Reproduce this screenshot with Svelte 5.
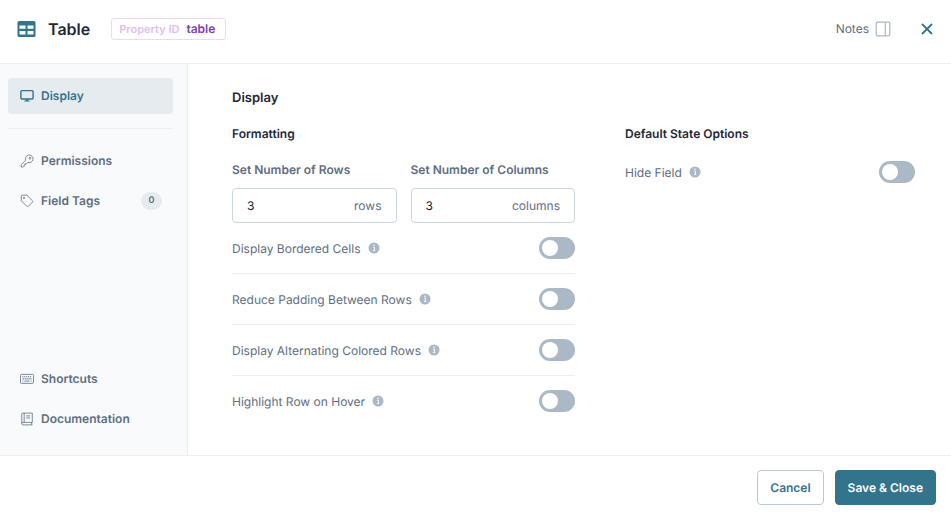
<script>
  let activeSection = 'display';
  let rows = '3';
  let columns = '3';
  let hideField = false;

  const navItems = [
    { id: 'permissions', label: 'Permissions', icon: 'key' },
    { id: 'tags', label: 'Field Tags', icon: 'tag', count: 0 }
  ];

  const helpItems = [
    { id: 'shortcuts', label: 'Shortcuts', icon: 'keyboard' },
    { id: 'docs', label: 'Documentation', icon: 'book' }
  ];

  let toggles = [
    { id: 'bordered', label: 'Display Bordered Cells', checked: false },
    { id: 'padding', label: 'Reduce Padding Between Rows', checked: false },
    { id: 'alternating', label: 'Display Alternating Colored Rows', checked: false },
    { id: 'highlight', label: 'Highlight Row on Hover', checked: false }
  ];
</script>

{#snippet icon(name)}
  <svg class="icon" viewBox="0 0 14 14" aria-hidden="true">
    {#if name === 'display'}
      <rect x="0.9" y="1.6" width="12.2" height="8.4" rx="0.9" stroke-width="1.4" />
      <path d="M5.8 10.2h2.4l.4 1.5h1.2v.8H4.2v-.8h1.2z" fill="currentColor" stroke="none" />
    {:else if name === 'key'}
      <path d="M5.7 6.2a3.8 3.8 0 1 1 2.2 2.2L6.7 9.5H5.5v1.3H4.1v1.5l-.7.7H1.2V10.7z" />
      <circle cx="9.9" cy="4.2" r="0.9" />
    {:else if name === 'tag'}
      <path d="M1.3 2.2v4.2c0 .3.1.5.3.7l5.2 5.2c.5.5 1.1.5 1.6 0l4-4c.5-.5.5-1.1 0-1.6L7.2 1.5a1 1 0 0 0-.7-.3H2.3a1 1 0 0 0-1 1z" />
      <circle cx="4" cy="4" r="0.6" fill="currentColor" />
    {:else if name === 'keyboard'}
      <rect x="0.5" y="2.4" width="13" height="9" rx="1.1" />
      <path d="M2.3 4.8h9.6M2.8 6.9h8.6" stroke-width="1.1" stroke-dasharray="1.1 .8" />
      <path d="M2.3 9.1h1M4.3 9.1h5.4M10.7 9.1h1" />
    {:else if name === 'book'}
      <path d="M3 1.1h9.3v9.3H3a1.2 1.2 0 0 0 0 2.5h9.4M1.8 11.5V2.2A1.1 1.1 0 0 1 3 1.1M11.6 10.5v2.3M4.2 1.2v9.1M6.1 3.9h4.2M6.1 6h4.2" />
    {/if}
  </svg>
{/snippet}

{#snippet navLink(item)}
  <a
    href="#{item.id}"
    class="nav-link"
    class:active={activeSection === item.id}
    on:click={() => (activeSection = item.id)}
  >
    {@render icon(item.icon)}
    <span>{item.label}</span>
    {#if item.count !== undefined}
      <span class="count">{item.count}</span>
    {/if}
  </a>
{/snippet}

{#snippet info()}
  <svg class="info" viewBox="0 0 12 12" aria-hidden="true">
    <circle cx="6" cy="6" r="5.5" fill="#abb9c6" />
    <path d="M5 5.2h1.4v3.2M5 8.5h2.2" stroke="#fff" stroke-width="0.9" fill="none" />
    <circle cx="6" cy="3.3" r="0.8" fill="#fff" />
  </svg>
{/snippet}

<div class="modal">
  <header class="header">
    <svg class="logo" viewBox="0 0 18 16" aria-hidden="true">
      <path fill="currentColor" fill-rule="evenodd" d="M1.6 0h14.8A1.6 1.6 0 0 1 18 1.6v12.8a1.6 1.6 0 0 1-1.6 1.6H1.6A1.6 1.6 0 0 1 0 14.4V1.6A1.6 1.6 0 0 1 1.6 0zM2 4.4v3.4h6V4.4zM10 4.4v3.4h6V4.4zM2 10v3.6h6V10zM10 10v3.6h6V10z" />
    </svg>
    <h1>Table</h1>
    <div class="property">
      <span class="property-label">Property ID</span>
      <span class="property-value">table</span>
    </div>
    <button type="button" class="notes">
      Notes
      <svg viewBox="0 0 16 16" aria-hidden="true">
        <rect x="1.2" y="1.2" width="13.6" height="13.6" rx="1.2" />
        <path d="M10.3 1.2v13.6" />
      </svg>
    </button>
    <button type="button" class="close" aria-label="Close">
      <svg viewBox="0 0 12 12" aria-hidden="true">
        <path d="M1 1l10 10M11 1L1 11" />
      </svg>
    </button>
  </header>

  <div class="body">
    <nav class="sidebar">
      {@render navLink({ id: 'display', label: 'Display', icon: 'display' })}
      <hr />
      {#each navItems as item}
        {@render navLink(item)}
      {/each}
      <div class="help">
        {#each helpItems as item}
          {@render navLink(item)}
        {/each}
      </div>
    </nav>

    <main class="content">
      <h2>Display</h2>
      <div class="panels">
        <section>
          <h3>Formatting</h3>
          <div class="fields">
            <div class="field">
              <label for="rows">Set Number of Rows</label>
              <div class="input-wrap">
                <input id="rows" type="text" inputmode="numeric" bind:value={rows} />
                <span>rows</span>
              </div>
            </div>
            <div class="field">
              <label for="columns">Set Number of Columns</label>
              <div class="input-wrap">
                <input id="columns" type="text" inputmode="numeric" bind:value={columns} />
                <span>columns</span>
              </div>
            </div>
          </div>
          {#each toggles as toggle}
            <div class="toggle-row">
              <label for={toggle.id}>{toggle.label}</label>
              {@render info()}
              <input id={toggle.id} class="switch" type="checkbox" bind:checked={toggle.checked} />
            </div>
          {/each}
        </section>

        <section>
          <h3>Default State Options</h3>
          <div class="toggle-row">
            <label for="hide">Hide Field</label>
            {@render info()}
            <input id="hide" class="switch" type="checkbox" bind:checked={hideField} />
          </div>
        </section>
      </div>
    </main>
  </div>

  <footer class="footer">
    <button type="button" class="btn">Cancel</button>
    <button type="button" class="btn primary">Save &amp; Close</button>
  </footer>
</div>

<style>
  :global(body) {
    margin: 0;
    background: #fff;
  }

  .modal {
    display: flex;
    flex-direction: column;
    min-height: 100vh;
    font-family: Inter, 'Liberation Sans', sans-serif;
    font-size: 12px;
    line-height: 16px;
    text-rendering: geometricPrecision;
    color: #5f6e80;
  }

  .modal :global(*) {
    box-sizing: border-box;
  }

  h1,
  h2,
  h3 {
    margin: 0;
    font-weight: 600;
    color: #1f2735;
  }

  button,
  input {
    font: inherit;
    color: inherit;
    text-rendering: inherit;
  }

  button {
    border: 0;
    padding: 0;
    background: none;
    cursor: pointer;
  }

  .header {
    display: flex;
    align-items: center;
    padding: 0 16px 5px 17px;
    height: 64px;
    border-bottom: 1px solid #eceff2;
  }

  .logo {
    width: 19px;
    height: 16px;
    margin-right: 12px;
    color: #33748d;
  }

  h1 {
    font-size: 16px;
    line-height: 24px;
  }

  .property {
    display: flex;
    gap: 7px;
    margin-left: 21px;
    padding: 2px 10px 2px 7px;
    border: 1px solid #ecd9f5;
    border-radius: 3px;
  }

  .property-label {
    font-size: 11px;
    font-weight: 600;
    color: #dfbfee;
  }

  .property-value {
    font-weight: 600;
    color: #7c43a8;
  }

  .notes {
    display: flex;
    align-items: center;
    gap: 6px;
    margin-left: auto;
  }

  .notes svg {
    width: 16px;
    height: 16px;
    fill: none;
    stroke: #a9b8c5;
    stroke-width: 1.2;
  }

  .close {
    display: flex;
    padding: 2px;
    margin-left: 28px;
  }

  .close svg {
    width: 12px;
    height: 12px;
    stroke: #33748d;
    stroke-width: 1.8;
  }

  .body {
    display: flex;
    flex: 1;
  }

  .sidebar {
    display: flex;
    flex-direction: column;
    gap: 4px;
    flex: none;
    width: 188px;
    padding: 14px 14px 18px 8px;
    background: #f8fafc;
    border-right: 1px solid #eceff2;
  }

  .nav-link {
    display: flex;
    align-items: center;
    gap: 7px;
    height: 36px;
    padding: 0 11px 0 12px;
    border-radius: 4px;
    font-weight: 600;
    color: #5f6e80;
    text-decoration: none;
  }

  .nav-link.active {
    background: #e6ebef;
    color: #33748d;
  }

  .icon {
    width: 14px;
    height: 14px;
    fill: none;
    stroke: currentColor;
    stroke-width: 0.8;
  }

  .count {
    margin-left: auto;
    width: 21px;
    border-radius: 9px;
    background: #e6ebef;
    font-size: 9px;
    line-height: 18px;
    text-align: center;
  }

  hr {
    width: 100%;
    margin: 10px 0;
    border: 0;
    border-top: 1px solid #eceff2;
  }

  .help {
    display: flex;
    flex-direction: column;
    gap: 4px;
    margin-top: auto;
  }

  .content {
    flex: 1;
    padding: 24px 36px 24px 44px;
  }

  h2 {
    font-size: 13px;
    line-height: 20px;
  }

  h3 {
    font-size: 12px;
    line-height: 16px;
  }

  .panels {
    display: grid;
    grid-template-columns: minmax(0, 343fr) minmax(0, 290fr);
    gap: 50px;
    margin-top: 18px;
  }

  .fields {
    display: grid;
    grid-template-columns: repeat(2, minmax(0, 1fr));
    gap: 14px;
    margin-top: 20px;
  }

  .field label {
    display: block;
    margin-bottom: 10px;
    font-weight: 600;
  }

  .input-wrap {
    display: flex;
    align-items: center;
    height: 35px;
    padding: 0 14px;
    border: 1px solid #ccd4dc;
    border-radius: 4px;
  }

  .input-wrap input {
    flex: 1;
    min-width: 0;
    padding: 0;
    border: 0;
    outline: 0;
    background: none;
    color: #1f2735;
  }

  .toggle-row {
    display: flex;
    align-items: center;
    height: 51px;
    border-bottom: 1px solid #eceff2;
  }

  .toggle-row:last-child {
    border-bottom-color: transparent;
  }

  h3 + .toggle-row {
    margin-top: 5px;
  }

  .toggle-row label {
    padding-top: 2px;
  }

  .info {
    width: 12px;
    height: 12px;
    margin-left: 7px;
  }

  .switch {
    appearance: none;
    width: 36px;
    height: 22px;
    margin: 0 0 0 auto;
    padding: 3px;
    border-radius: 11px;
    background: #abb9c6;
    cursor: pointer;
  }

  .switch::before {
    content: '';
    display: block;
    width: 16px;
    height: 16px;
    border-radius: 50%;
    background: #fff;
  }

  .switch:checked {
    background: #33748d;
  }

  .switch:checked::before {
    margin-left: auto;
  }

  .footer {
    display: flex;
    justify-content: flex-end;
    align-items: center;
    gap: 11px;
    height: 60px;
    padding: 4px 15px 0;
    border-top: 1px solid #eceff2;
  }

  .btn {
    height: 35px;
    padding: 0 12px;
    border: 1px solid #b5cad5;
    border-radius: 4px;
    font-weight: 600;
    color: #33748d;
  }

  .btn.primary {
    border-color: #33748d;
    background: #33748d;
    color: #fff;
  }
</style>
